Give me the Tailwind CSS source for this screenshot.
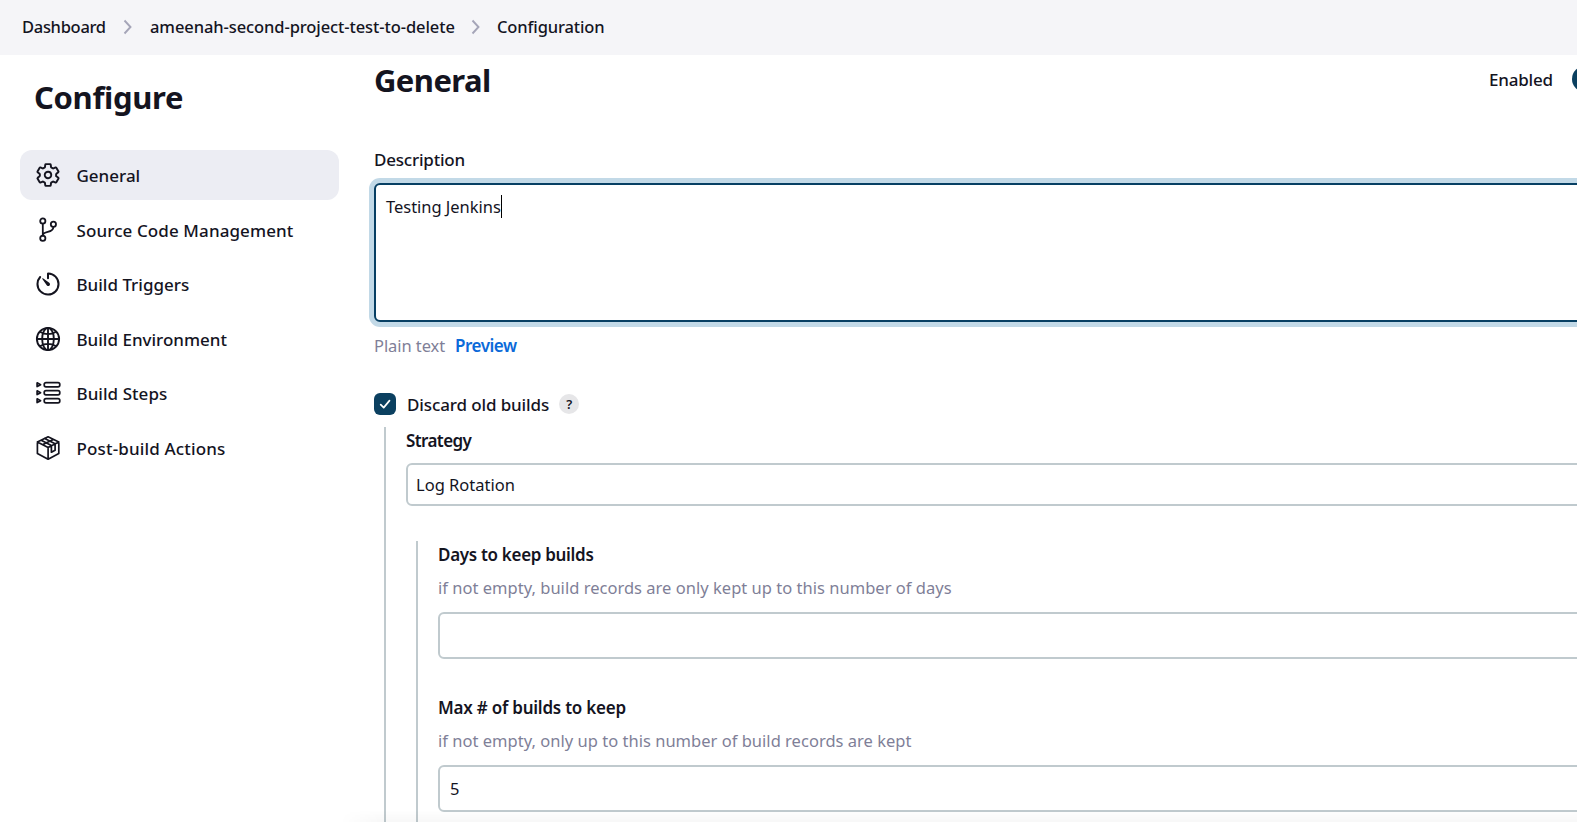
<!DOCTYPE html>
<html lang="en">
<head>
<meta charset="utf-8">
<title>Configuration</title>
<script src="https://cdn.jsdelivr.net/npm/@tailwindcss/browser@4"></script>
</head>
<body class="relative h-[822px] w-[1577px] overflow-hidden bg-white font-['Noto_Sans',sans-serif] text-[#14141f]">
  <nav class="flex h-[55px] items-center bg-[#f5f5f8] pb-[2px] pl-[22px] text-[16.5px] leading-6 font-medium whitespace-nowrap">
    <span class="w-[101px] tracking-[-0.3px]">Dashboard</span>
    <svg class="mt-px h-4 w-[9px] shrink-0" viewBox="0 0 9 16" fill="none" stroke="#a5a5b8" stroke-width="1.9"><path d="M1.5 1.5 7.5 8l-6 6.5"/></svg>
    <span class="ml-[18px] w-[328px] tracking-[-0.09px]">ameenah-second-project-test-to-delete</span>
    <svg class="mt-px -ml-[7px] h-4 w-[9px] shrink-0" viewBox="0 0 9 16" fill="none" stroke="#a5a5b8" stroke-width="1.9"><path d="M1.5 1.5 7.5 8l-6 6.5"/></svg>
    <span class="ml-[17px] tracking-[-0.12px]">Configuration</span>
  </nav>

  <div class="flex h-[767px]">
    <aside class="w-[374px] shrink-0 pt-[22px] pl-5">
      <h1 class="pl-[14px] text-[31px] leading-10 font-bold tracking-[-0.33px]">Configure</h1>
      <ul class="mt-[33px] flex w-[319px] flex-col gap-[4.6px] text-[17px] font-medium">
        <li class="flex h-[50px] items-center gap-4 rounded-xl bg-[#ecedf3] pl-[14.5px]">
          <svg class="size-[26px]" viewBox="0 0 512 512" fill="none" stroke="currentColor" stroke-width="38" stroke-linecap="round" stroke-linejoin="round"><path d="M262.29 192.31a64 64 0 1057.4 57.4 64.13 64.13 0 00-57.4-57.4zM416.39 256a154.34 154.34 0 01-1.53 20.79l45.21 35.46a10.81 10.81 0 012.45 13.75l-42.77 74a10.81 10.81 0 01-13.14 4.59l-44.9-18.08a16.11 16.11 0 00-15.17 1.75A164.48 164.48 0 01325 400.8a15.94 15.94 0 00-8.82 12.14l-6.73 47.89a11.08 11.08 0 01-10.68 9.17h-85.54a11.11 11.11 0 01-10.69-8.87l-6.72-47.82a16.07 16.07 0 00-9-12.22 155.3 155.3 0 01-21.46-12.57 16 16 0 00-15.11-1.71l-44.89 18.07a10.81 10.81 0 01-13.14-4.58l-42.77-74a10.8 10.8 0 012.45-13.75l38.21-30a16.05 16.05 0 006-14.08c-.36-4.17-.58-8.33-.58-12.5s.21-8.27.58-12.35a16 16 0 00-6.07-13.94l-38.19-30A10.81 10.81 0 0149.48 186l42.77-74a10.81 10.81 0 0113.14-4.59l44.9 18.08a16.11 16.11 0 0015.17-1.75A164.48 164.48 0 01187 111.2a15.94 15.94 0 008.82-12.14l6.73-47.89A11.08 11.08 0 01213.23 42h85.54a11.11 11.11 0 0110.69 8.87l6.72 47.82a16.07 16.07 0 009 12.22 155.3 155.3 0 0121.46 12.57 16 16 0 0015.11 1.71l44.89-18.07a10.81 10.81 0 0113.14 4.58l42.77 74a10.8 10.8 0 01-2.45 13.75l-38.21 30a16.05 16.05 0 00-6.05 14.08c.33 4.14.55 8.3.55 12.47z"/></svg>
          <span class="pt-px">General</span>
        </li>
        <li class="flex h-[50px] items-center gap-4 pl-[14.5px]">
          <svg class="size-[26px]" viewBox="0 0 26 26" fill="none" stroke="currentColor" stroke-width="1.8" stroke-linecap="round"><circle cx="7.8" cy="4" r="2.6"/><circle cx="7.8" cy="21.3" r="2.6"/><circle cx="18.4" cy="7.3" r="2.6"/><path d="M7.8 18.7V6.6M18.4 9.9c0 6.6-9.6 3.4-10.6 8.2"/></svg>
          <span class="pt-[2px] tracking-[0.1px]">Source Code Management</span>
        </li>
        <li class="flex h-[50px] items-center gap-4 pl-[14.5px]">
          <svg class="size-[26px]" viewBox="0 0 512 512" fill="none" stroke="currentColor" stroke-width="37" stroke-linecap="round" stroke-linejoin="round"><path d="M112.91 128A191.85 191.85 0 0064 254c-1.18 106.35 85.65 193.8 192 194 106.2.2 192-85.83 192-192 0-104.54-83.55-189.61-187.5-192a4.36 4.36 0 00-4.5 4.37V152" transform="translate(256 256) scale(1.08) translate(-256 -256)"/><path fill="currentColor" stroke="none" d="M233.38 278.63l-79-113a8.13 8.13 0 0111.32-11.32l113 79a32.5 32.5 0 01-37.25 53.26 33.21 33.21 0 01-8.07-7.94z" transform="translate(256 256) scale(1.1) translate(-256 -256)"/></svg>
          <span class="pt-[2px]">Build Triggers</span>
        </li>
        <li class="flex h-[50px] items-center gap-4 pl-[14.5px]">
          <svg class="size-[26px]" viewBox="0 0 512 512" fill="none" stroke="currentColor" stroke-width="37" stroke-linecap="round"><circle cx="256" cy="256" r="219"/><ellipse cx="256" cy="256" rx="115" ry="219"/><path d="M107 117.33c38.24 27.15 96.38 43.34 149 43.34s110.43-16.19 149-43.34M405 394.67c-38.24-27.15-96.38-43.34-149-43.34s-110.43 16.19-149 43.34M256 40v432M472 256H40"/></svg>
          <span class="pt-[2px]">Build Environment</span>
        </li>
        <li class="flex h-[50px] items-center gap-4 pl-[14.5px]">
          <svg class="size-[26px]" viewBox="0 0 26 26" fill="none" stroke="currentColor" stroke-width="1.7" stroke-linejoin="round"><path d="M2.1 2.8v3.8l3.5-1.9zM2.1 10.8v3.8l3.5-1.9zM2.1 18.8v3.8l3.5-1.9z"/><rect x="9.2" y="2.6" width="15.6" height="4.2" rx="1.8"/><rect x="9.2" y="10.6" width="15.6" height="4.2" rx="1.8"/><rect x="9.2" y="18.6" width="15.6" height="4.2" rx="1.8"/></svg>
          <span class="tracking-[0.04px]">Build Steps</span>
        </li>
        <li class="flex h-[50px] items-center gap-4 pl-[14.5px]">
          <svg class="size-[26px]" viewBox="0 0 26 26" fill="none" stroke="currentColor" stroke-width="1.7" stroke-linejoin="round" stroke-linecap="round"><path d="M13.1 1.8 23.8 7v11.4l-10.7 5.8L2.4 18.4V7zM2.4 7l10.7 5.4L23.8 7M13.1 12.4v11.8M6.2 5.2l10.2 5.4v6.6l3.7-2V8.8L9.7 3.5M7.9 9.6l10.4-5.2"/></svg>
          <span class="pt-[2px] tracking-[0.15px]">Post-build Actions</span>
        </li>
      </ul>
    </aside>

    <main class="w-[1203px] shrink-0 pt-[5px]">
      <div class="flex h-10 items-center">
        <h2 class="w-[1115px] shrink-0 text-[31px] leading-10 font-bold tracking-[-0.57px]">General</h2>
        <span class="w-[83px] shrink-0 text-[17px] leading-6 font-medium tracking-[-0.2px]">Enabled</span>
        <span class="-mt-[2px] h-[26px] w-[53px] shrink-0 rounded-full bg-[#0b4060]"></span>
      </div>

      <label class="mt-12 block text-[17px] leading-6 font-medium tracking-[-0.21px]">Description</label>
      <div class="mt-[11px] flex h-[139px] w-[1230px] rounded-md border-2 border-[#073f63] bg-white pt-[10px] pl-[10px] text-[16.5px] leading-6 tracking-[-0.03px] ring-[5px] ring-[#c2d9e7]">
        <span>Testing Jenkins</span><i class="h-[23px] w-px bg-black"></i>
      </div>
      <div class="mt-3 flex gap-[10px] text-[16.5px] leading-6">
        <span class="tracking-[-0.08px] text-[#7f7f98]">Plain text</span>
        <a class="text-[17px] font-semibold tracking-[-0.5px] text-[#0b6ad9]">Preview</a>
      </div>

      <div class="mt-[34px] flex h-6 items-center">
        <span class="grid size-[22px] place-items-center rounded-md bg-[#0b4060]">
          <svg class="size-[22px]" viewBox="0 0 22 22" fill="none" stroke="#fff" stroke-width="1.7" stroke-linecap="round" stroke-linejoin="round"><path d="m6.7 11.6 3 3 5.8-7"/></svg>
        </span>
        <span class="ml-[11px] pt-px text-[17px] leading-6 font-medium tracking-[-0.12px]">Discard old builds</span>
        <span class="ml-[10px] grid size-5 place-items-center rounded-full bg-[#e6e6e8] text-[13px] leading-5 font-semibold">?</span>
      </div>

      <div class="mt-[11px] ml-[10px] h-[400px] border-l-2 border-[#c0cace] pt-[2px] pl-5">
        <div class="text-[17px] leading-6 font-semibold tracking-[-0.6px]">Strategy</div>
        <div class="mt-[10px] flex h-[43px] w-[1200px] items-center rounded-md border-2 border-[#c0cace] pt-px pl-2 text-[16.5px] leading-6">Log Rotation</div>

        <div class="mt-[35px] ml-[10px] h-[300px] border-l-2 border-[#c0cace] pt-[2px] pl-5 whitespace-nowrap">
          <div class="text-[17px] leading-6 font-semibold tracking-[-0.31px]">Days to keep builds</div>
          <div class="mt-[9px] text-[16.5px] leading-6 tracking-[0.02px] text-[#7f7f98]">if not empty, build records are only kept up to this number of days</div>
          <div class="mt-3 h-[47px] w-[1200px] rounded-md border-2 border-[#c0cace]"></div>
          <div class="mt-[37px] text-[17px] leading-6 font-semibold tracking-[-0.23px]">Max # of builds to keep</div>
          <div class="mt-[9px] text-[16.5px] leading-6 tracking-[0.02px] text-[#7f7f98]">if not empty, only up to this number of build records are kept</div>
          <div class="mt-3 flex h-[47px] w-[1200px] items-center rounded-md border-2 border-[#c0cace] pl-[10px] text-[16.5px] leading-6">5</div>
        </div>
      </div>
    </main>
  </div>
  <div class="absolute right-0 bottom-0 left-[340px] h-3 bg-gradient-to-b from-transparent to-black/3 [mask-image:linear-gradient(to_right,transparent,black_40px)]"></div>
</body>
</html>
